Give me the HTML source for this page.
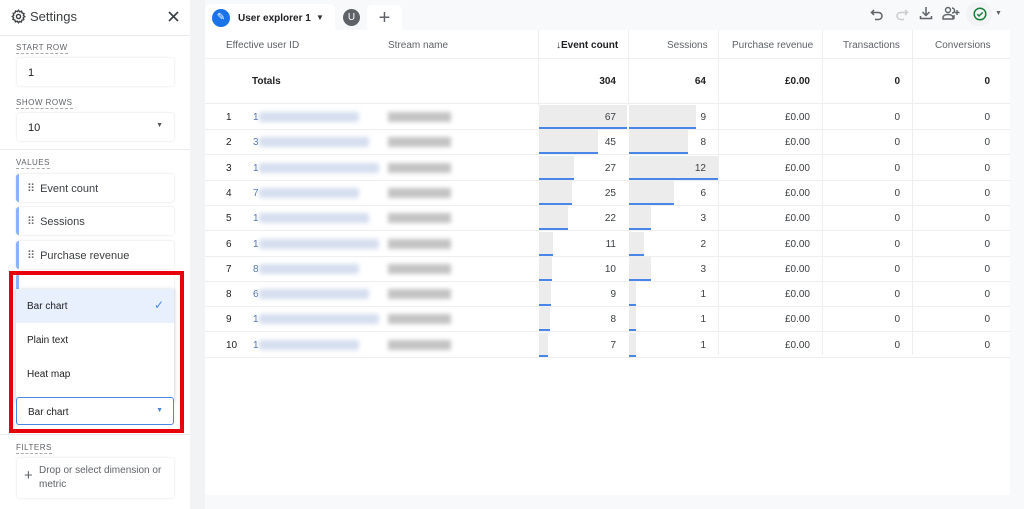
<!DOCTYPE html>
<html><head><style>
*{box-sizing:border-box;margin:0;padding:0}
body{width:1024px;height:509px;overflow:hidden;background:#f8f9fa;font-family:"Liberation Sans",sans-serif;color:#3c4043;position:relative}
.side{position:absolute;left:0;top:0;width:190px;height:509px;background:#fff}
.lbl{position:absolute;left:16px;font-size:8px;letter-spacing:.5px;color:#5f6368;border-bottom:1px dashed #aaa;padding-bottom:1px}
.inp{position:absolute;left:17px;width:157px;height:28px;background:#fff;box-shadow:0 0 2px rgba(0,0,0,.15);border-radius:3px;font-size:11px;padding:9px 11px;color:#202124}
.val{position:absolute;left:16px;width:158px;height:28px;background:#fff;box-shadow:0 0 2px rgba(0,0,0,.15);border-left:3px solid #8ab4f8;border-radius:3px;font-size:11px;padding:8px 0 0 8px;color:#3c4043}
.val b{font-weight:normal;color:#666;letter-spacing:-1px;margin-right:6px}
.hr{position:absolute;left:0;width:190px;height:1px;background:#e8eaed}
.main{position:absolute;left:205px;top:30px;width:805px;height:465px;background:#fff}
.tab{position:absolute;top:4px;height:28px;background:#fff}
.c{position:absolute;font-size:10px;text-align:right}
.h{position:absolute;top:40px;font-size:10px;color:#5f6368}
.bar{position:absolute;background:#ececec;border-bottom:2px solid #4a86e8}
.blur{position:absolute;background:#d5deef;filter:blur(2.5px);height:10px;border-radius:2px}
.blur2{position:absolute;background:#c4c4c4;filter:blur(2px);height:10px}
.rl{position:absolute;left:205px;width:805px;height:1px;background:#eee}
</style></head><body>
<div class="side">
 <svg style="position:absolute;left:11px;top:9px" width="15" height="15" viewBox="0 0 24 24"><path fill="none" stroke="#3c4043" stroke-width="2.2" d="M12 2l2 2.5 3-1 .8 3 3 .8-1 3L22 12l-2.5 2 1 3-3 .8-.8 3-3-1L12 22l-2-2.5-3 1-.8-3-3-.8 1-3L2 12l2.5-2-1-3 3-.8.8-3 3 1z"/><circle cx="12" cy="12" r="3.3" fill="none" stroke="#3c4043" stroke-width="2.2"/></svg>
 <div style="position:absolute;left:30px;top:9px;font-size:13px;color:#3c4043">Settings</div>
 <svg style="position:absolute;left:168px;top:11px" width="11" height="11" viewBox="0 0 11 11"><path d="M1 1L10 10M10 1L1 10" stroke="#3c4043" stroke-width="1.6"/></svg>
 <div class="hr" style="top:35px"></div>
 <div class="lbl" style="top:43px">START ROW</div>
 <div class="inp" style="top:58px">1</div>
 <div class="lbl" style="top:98px">SHOW ROWS</div>
 <div class="inp" style="top:113px">10<span style="position:absolute;right:11px;top:9px;font-size:7px;color:#555">▼</span></div>
 <div class="hr" style="top:149px"></div>
 <div class="lbl" style="top:158px">VALUES</div>
 <div class="val" style="top:174px"><b>⠿</b>Event count</div>
 <div class="val" style="top:207px"><b>⠿</b>Sessions</div>
 <div class="val" style="top:241px"><b>⠿</b>Purchase revenue</div>
 <div class="val" style="top:274px;height:20px"></div>
 <div style="position:absolute;left:9px;top:271px;width:175px;height:162px;border:4px solid #e8000b"></div>
 <div style="position:absolute;left:16px;top:289px;width:158px;height:112px;background:#fff;box-shadow:0 1px 4px rgba(0,0,0,.25)">
  <div style="height:34px;background:#e8f0fe;font-size:10px;padding:12px 0 0 11px;color:#202124;position:relative">Bar chart<span style="position:absolute;right:10px;top:9px;color:#4a86e8;font-size:12px">✓</span></div>
  <div style="height:34px;font-size:10px;padding:12px 0 0 11px;color:#202124">Plain text</div>
  <div style="height:34px;font-size:10px;padding:12px 0 0 11px;color:#202124">Heat map</div>
 </div>
 <div style="position:absolute;left:16px;top:397px;width:158px;height:28px;border:1px solid #4a86e8;border-radius:3px;background:#fff;font-size:10px;padding:9px 0 0 11px;color:#202124">Bar chart<span style="position:absolute;right:10px;top:9px;font-size:7px;color:#4a86e8">▼</span></div>
 <div class="hr" style="top:434px"></div>
 <div class="lbl" style="top:443px">FILTERS</div>
 <div class="inp" style="top:458px;height:40px;padding:6px 0 0 22px;font-size:10px;color:#5f6368;line-height:14px">Drop or select dimension or metric<span style="position:absolute;left:7px;top:11px;font-size:15px">+</span></div>
</div>
<div style="position:absolute;left:190px;top:0;width:15px;height:509px;background:#f1f3f4"></div>
<div class="tab" style="left:205px;width:130px;border-radius:6px 6px 0 0;top:4px;height:30px"></div>
<div style="position:absolute;left:212px;top:9px;width:18px;height:18px;border-radius:50%;background:#1a73e8;color:#fff;font-size:10px;text-align:center;line-height:18px">✎</div>
<div style="position:absolute;left:238px;top:13px;font-size:10px;font-weight:bold;color:#202124">User explorer 1</div>
<div style="position:absolute;left:316px;top:13px;font-size:8px;color:#333">▼</div>
<div style="position:absolute;left:343px;top:9px;width:17px;height:17px;border-radius:50%;background:#5f6368;color:#fff;font-size:10px;text-align:center;line-height:17px">U</div>
<div class="tab" style="left:367px;width:35px;border-radius:5px 5px 0 0;font-size:20px;text-align:center;line-height:26px;color:#5f6368;top:5px;height:27px">+</div>
<svg style="position:absolute;left:870px;top:7px" width="14" height="14" viewBox="0 0 14 14"><path d="M4 3L1.5 5.5 4 8M2 5.5h6.5a3.5 3.5 0 010 7H5" fill="none" stroke="#5f6368" stroke-width="1.5"/></svg>
<svg style="position:absolute;left:895px;top:7px" width="14" height="14" viewBox="0 0 14 14"><path d="M10 3l2.5 2.5L10 8M12 5.5H5.5a3.5 3.5 0 000 7H9" fill="none" stroke="#ccc" stroke-width="1.5"/></svg>
<svg style="position:absolute;left:919px;top:6px" width="14" height="14" viewBox="0 0 14 14"><path d="M7 1v8M3.5 6L7 9.5 10.5 6M1.5 10v2.5h11V10" fill="none" stroke="#5f6368" stroke-width="1.5"/></svg>
<svg style="position:absolute;left:942px;top:6px" width="18" height="14" viewBox="0 0 18 14"><circle cx="6" cy="4" r="2.5" fill="none" stroke="#5f6368" stroke-width="1.4"/><path d="M1 13v-1.5C1 9.5 3.5 8.5 6 8.5s5 1 5 3V13z" fill="none" stroke="#5f6368" stroke-width="1.4"/><path d="M10 2a2.5 2.5 0 010 5M12 9v4M15 4v5M12.5 6.5h5" fill="none" stroke="#5f6368" stroke-width="1.4"/></svg>
<div style="position:absolute;left:966px;top:2px;width:26px;height:24px;border-radius:12px;background:#f1f3f4"></div>
<svg style="position:absolute;left:973px;top:7px" width="14" height="14" viewBox="0 0 14 14"><circle cx="7" cy="7" r="5.8" fill="none" stroke="#188038" stroke-width="1.5"/><path d="M4.3 7.2l1.8 1.8 3.6-3.6" fill="none" stroke="#188038" stroke-width="1.5"/></svg>
<div style="position:absolute;left:995px;top:10px;font-size:7px;color:#5f6368">▼</div>
<div class="main"></div>
<div style="position:absolute;left:538px;top:30px;width:1px;height:75px;background:#eee"></div>
<div style="position:absolute;left:628px;top:30px;width:1px;height:75px;background:#eee"></div>
<div style="position:absolute;left:718px;top:30px;width:1px;height:325px;background:#eee"></div>
<div style="position:absolute;left:822px;top:30px;width:1px;height:325px;background:#eee"></div>
<div style="position:absolute;left:912px;top:30px;width:1px;height:325px;background:#eee"></div>
<div class="rl" style="top:58px"></div>
<div class="rl" style="top:103px"></div>
<div class="h" style="left:226px">Effective user ID</div>
<div class="h" style="left:388px">Stream name</div>
<div class="h" style="left:556px;color:#202124;font-weight:bold">↓Event count</div>
<div class="h" style="left:667px">Sessions</div>
<div class="h" style="left:732px">Purchase revenue</div>
<div class="h" style="left:843px">Transactions</div>
<div class="h" style="left:935px">Conversions</div>
<div style="position:absolute;left:252px;top:76px;font-size:10px;font-weight:bold;color:#202124">Totals</div>
<div class="c" style="left:540px;width:76px;top:76px;font-weight:bold;color:#202124">304</div>
<div class="c" style="left:630px;width:76px;top:76px;font-weight:bold;color:#202124">64</div>
<div class="c" style="left:720px;width:90px;top:76px;font-weight:bold;color:#202124">£0.00</div>
<div class="c" style="left:824px;width:76px;top:76px;font-weight:bold;color:#202124">0</div>
<div class="c" style="left:914px;width:76px;top:76px;font-weight:bold;color:#202124">0</div>
<div id="rows"></div>
<script>
var ev=[67,45,27,25,22,11,10,9,8,7],se=[9,8,12,6,3,2,3,1,1,1],first=['1','3','1','7','1','1','8','6','1','1'];
var h='';
for(var i=0;i<10;i++){var t=104+i*25.3;
h+='<div class="rl" style="top:'+(t+25)+'px"></div>';
h+='<div class="bar" style="left:539px;top:'+(t+1)+'px;height:24px;width:'+Math.max(7,ev[i]/67*88)+'px"></div>';
h+='<div class="bar" style="left:629px;top:'+(t+1)+'px;height:24px;width:'+Math.max(7,se[i]/12*89)+'px"></div>';
h+='<div style="position:absolute;left:226px;top:'+(t+8)+'px;font-size:10px;color:#202124">'+(i+1)+'</div>';
h+='<div style="position:absolute;left:253px;top:'+(t+8)+'px;font-size:10px;color:#4a6fb5">'+first[i]+'</div>';
h+='<div class="blur" style="left:259px;top:'+(t+8)+'px;width:'+(100+(i%3)*10)+'px"></div>';
h+='<div class="blur2" style="left:388px;top:'+(t+8)+'px;width:63px"></div>';
h+='<div class="c" style="left:540px;width:76px;top:'+(t+8)+'px">'+ev[i]+'</div>';
h+='<div class="c" style="left:630px;width:76px;top:'+(t+8)+'px">'+se[i]+'</div>';
h+='<div class="c" style="left:720px;width:90px;top:'+(t+8)+'px">£0.00</div>';
h+='<div class="c" style="left:824px;width:76px;top:'+(t+8)+'px">0</div>';
h+='<div class="c" style="left:914px;width:76px;top:'+(t+8)+'px">0</div>';}
document.getElementById('rows').innerHTML=h;
</script>
</body></html>
